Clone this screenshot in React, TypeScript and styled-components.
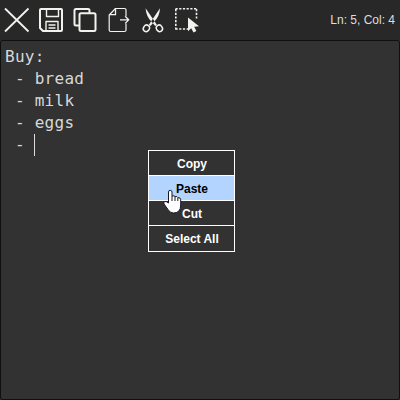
import React from "react";
import styled, { createGlobalStyle } from "styled-components";

const GlobalStyle = createGlobalStyle`
  * { box-sizing: border-box; }
  html, body { margin: 0; background: #282828; overflow: hidden; }
`;

const Window = styled.main`
  position: relative;
  display: flex;
  flex-direction: column;
  width: 400px;
  height: 400px;
  background: #282828;
  font-family: "Liberation Sans", Arial, sans-serif;
`;

const Toolbar = styled.header`
  display: flex;
  align-items: center;
  height: 40px;
  padding: 0 5px 0 0;
`;

const ToolButton = styled.button`
  display: block;
  width: 34px;
  height: 40px;
  padding: 0;
  border: 0;
  background: transparent;
  color: #f2f2ee;

  svg { display: block; }
`;

const Position = styled.span`
  margin-left: auto;
  color: #dedede;
  font-size: 12px;
  line-height: 40px;
  white-space: pre;
`;

const Editor = styled.section`
  flex: 1;
  padding: 5px 4px;
  border: 1px solid #101010;
  border-radius: 3px;
  background: #323232;
  color: #d8d8d8;
  font-family: "DejaVu Sans Mono", monospace;
  font-size: 16px;
  letter-spacing: 0.27px;
  line-height: 22px;
`;

const Line = styled.div`
  display: flex;
  height: 22px;
  white-space: pre;
`;

const Caret = styled.span`
  width: 1px;
  height: 22px;
  margin-left: -1px;
  background: #dcdcdc;
`;

const Menu = styled.div`
  position: absolute;
  left: 148px;
  top: 150px;
  width: 87px;
  border: 1px solid #ffffff;
  background: #323232;
`;

const MenuItem = styled.button<{ $active?: boolean }>`
  display: block;
  width: 100%;
  height: 25px;
  padding: 2px 0 0 1px;
  border: 0;
  border-bottom: 1px solid #ffffff;
  background: ${({ $active }) => ($active ? "#b3d4ff" : "transparent")};
  color: ${({ $active }) => ($active ? "#000000" : "#ffffff")};
  font: bold 12px/22px "Liberation Sans", Arial, sans-serif;
  text-align: center;

  &:last-child { border-bottom: 0; padding-top: 1px; }
`;

const Pointer = styled.svg`
  position: absolute;
  left: 163px;
  top: 189px;
`;

const tools = [
  { name: "Close", art: <path d="M5 8.5 28.5 31.5M28.5 8.5 5 31.5" strokeWidth="1.8" /> },
  {
    name: "Save",
    art: (
      <>
        <path d="M7 9H27Q28 9 28 10V30Q28 31 27 31H9L6 28V10Q6 9 7 9Z" strokeWidth="2" />
        <path d="M12.5 9V16.5H24.5V9M12 31V21.5H24V31" strokeWidth="1.4" />
        <path d="M14.5 25H21.5M14.5 28H21.5" strokeWidth="1.4" />
      </>
    ),
  },
  {
    name: "Copy",
    art: (
      <>
        <path d="M11 25.5H8Q6.5 25.5 6.5 24V10.5Q6.5 9 8 9H20Q21.5 9 21.5 10.5V13" strokeWidth="2" />
        <rect x="11.5" y="13.3" width="16" height="17.7" rx="1.5" strokeWidth="2" />
      </>
    ),
  },
  {
    name: "Export",
    art: (
      <>
        <path d="M24 16V10Q24 8.5 22.5 8.5H13.5L7.2 15V30Q7.2 31.5 8.7 31.5H22.5Q24 31.5 24 30V23.5" strokeWidth="1.2" />
        <path d="M13.5 8.5V14.7H7.5M18 19.8H26.7M23.2 16.2 26.7 19.8 23.2 23.4" strokeWidth="1.3" />
      </>
    ),
  },
  {
    name: "Cut",
    art: (
      <>
        <path d="M9.6 8.3 18 20.5 21 25 19.2 26 15.8 22Q10 16.5 9.6 8.3ZM24 8.3 15.7 20.5 12.7 25 14.5 26 17.9 22Q23.7 16.5 24 8.3Z" fill="currentColor" stroke="none" />
        <ellipse cx="10.4" cy="28.3" rx="2.9" ry="3.4" transform="rotate(35 10.4 28.3)" strokeWidth="1.5" />
        <ellipse cx="23.4" cy="28.3" rx="2.9" ry="3.4" transform="rotate(-35 23.4 28.3)" strokeWidth="1.5" />
      </>
    ),
  },
  {
    name: "Select",
    art: (
      <>
        <path d="M5.5 8.8H27M26.5 9V20M5.8 9V29.5M5.5 29H18" strokeWidth="1.6" strokeDasharray="2.2 1.5" />
        <path d="M18 17.5V31.2L21.2 28.3 23.5 32.5 26.4 30.9 24.2 26.8 29 26.3Z" fill="currentColor" stroke="none" />
      </>
    ),
  },
];

const lines = ["Buy:", " - bread", " - milk", " - eggs", " - "];

export default function App() {
  return (
    <>
      <GlobalStyle />
      <Window>
        <Toolbar>
          {tools.map(({ name, art }) => (
            <ToolButton key={name} aria-label={name}>
              <svg width="34" height="40" viewBox="0 0 34 40" fill="none" stroke="currentColor" strokeLinejoin="round">
                {art}
              </svg>
            </ToolButton>
          ))}
          <Position>Ln: 5, Col: 4</Position>
        </Toolbar>
        <Editor>
          {lines.map((text, index) => (
            <Line key={text}>
              {text}
              {index === lines.length - 1 && <Caret />}
            </Line>
          ))}
        </Editor>
        <Menu>
          <MenuItem>Copy</MenuItem>
          <MenuItem $active>Paste</MenuItem>
          <MenuItem>Cut</MenuItem>
          <MenuItem>Select All</MenuItem>
        </Menu>
        <Pointer width="19" height="25" viewBox="0 0 19 25">
          <path
            d="M5.5 14V3Q5.5 1.3 7.2 1.3T9 3V7Q11.5 6.2 12 7.6Q14.2 7 14.8 8.6Q17.7 8.3 17.7 10.8V16Q17.7 24 10.5 24Q7 24 5 20.5L1 15Q.2 12.7 2 12.5Q3.5 12.3 5.5 14Z"
            fill="#ffffff"
            stroke="#171924"
            strokeWidth="1"
          />
          <path d="M9 7V12M12 7.8V12M14.8 9V12" fill="none" stroke="#171924" strokeWidth="1" />
        </Pointer>
      </Window>
    </>
  );
}
